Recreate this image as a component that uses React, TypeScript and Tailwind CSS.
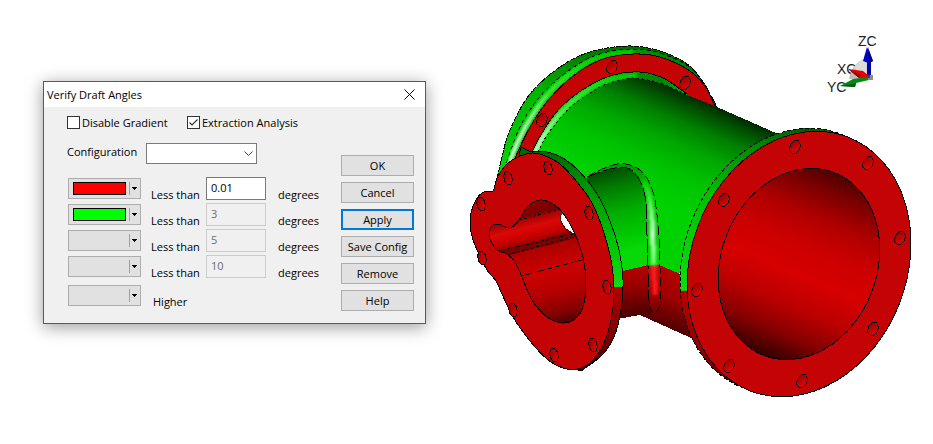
import type { ReactNode } from "react";
import clsx from "clsx";

type Point = [number, number];

interface Range {
  id: string;
  color?: string;
  limit: string;
  disabled: boolean;
}

const ranges: Range[] = [
  { id: "first", color: "bg-[#ff0000]", limit: "0.01", disabled: false },
  { id: "second", color: "bg-[#00ff00]", limit: "3", disabled: true },
  { id: "third", limit: "5", disabled: true },
  { id: "fourth", limit: "10", disabled: true },
];

const actions = ["OK", "Cancel", "Apply", "Save Config", "Remove", "Help"];

// Catmull-Rom curve through the points, written as cubic beziers
function curve(pts: Point[], closed = false) {
  const n = pts.length;
  const at = (i: number) => (closed ? pts[(i + n) % n] : pts[Math.max(0, Math.min(n - 1, i))]);
  let d = `M${pts[0][0]} ${pts[0][1]}`;
  for (let i = 0; i < (closed ? n : n - 1); i++) {
    const [a, b, c, e] = [at(i - 1), at(i), at(i + 1), at(i + 2)];
    d += `C${b[0] + (c[0] - a[0]) / 6} ${b[1] + (c[1] - a[1]) / 6} ${c[0] - (e[0] - b[0]) / 6} ${c[1] - (e[1] - b[1]) / 6} ${c[0]} ${c[1]}`;
  }
  return closed ? d + "Z" : d;
}

// outline of a tilted flange disc, in drawing coordinates so gradients stay upright
function disc(cx: number, cy: number, rx: number, ry: number, tilt: number) {
  const dx = ry * Math.sin((tilt * Math.PI) / 180);
  const dy = ry * Math.cos((tilt * Math.PI) / 180);
  return `M${cx + dx} ${cy - dy}A${rx} ${ry} ${tilt} 0 1 ${cx - dx} ${cy + dy}A${rx} ${ry} ${tilt} 0 1 ${cx + dx} ${cy - dy}Z`;
}

const backOuter: Point[] = [[496, 184], [502, 157], [510, 130], [530, 94], [560, 67], [590, 52], [628, 46], [660, 51], [687, 64], [703, 82], [717, 107]];
const backEdge: Point[] = [[503, 176], [508, 158], [523, 121], [547, 89], [577, 65], [603, 53], [633, 49], [660, 53], [688, 66], [705, 85], [716, 107]];
const ringOuter: Point[] = [[510, 172], [515, 158], [530, 127], [550, 98], [577, 73], [603, 59], [633, 54], [660, 57], [690, 71], [707, 89], [715, 108]];
const ringInner: Point[] = [[526, 170], [533, 150], [547, 125], [563, 105], [587, 87], [613, 75], [640, 72], [663, 78], [687, 94]];
const bodyStart: Point[] = [[530, 176], [540, 148], [553, 127], [573, 105], [600, 87], [617, 81], [633, 78], [660, 83], [687, 95]];
const backShine: Point[] = [[507, 172], [513, 153], [527, 124], [548, 94], [577, 69], [603, 56], [633, 52]];
const ringShine: Point[] = [[528, 171], [537, 148], [551, 125], [569, 105], [594, 86], [616, 78], [637, 75]];

const face: Point[] = [
  [493, 191], [497, 178], [507, 164], [520, 156], [532, 153], [543, 155], [560, 164], [577, 182], [592, 203], [603, 230],
  [611, 260], [614, 290], [611, 320], [603, 345], [590, 363], [577, 369], [563, 368], [547, 359], [530, 341], [513, 317],
  [502, 294], [496, 281], [487, 270], [477, 250], [471, 232], [471, 213], [477, 198], [484, 192],
];
const faceRim: Point[] = [
  [520, 156], [532, 152], [547, 152], [563, 158], [580, 172], [597, 194], [610, 221], [619, 250], [623, 280], [621, 310],
  [614, 337], [603, 354], [588, 366], [577, 369], [560, 340], [540, 250],
];
const opening: Point[] = [
  [519, 220], [527, 207], [540, 200], [553, 204], [563, 213], [575, 234], [583, 257], [586, 283], [583, 307], [575, 319],
  [562, 323], [547, 317], [532, 300], [522, 277], [515, 262], [507, 254], [497, 250], [490, 239], [490, 229], [497, 224],
  [510, 228],
];

const filletOuter: Point[] = [[587, 177], [600, 170], [617, 164], [630, 165], [641, 171], [649, 182], [655, 200], [659, 237], [660, 267], [660, 303], [656, 312]];
const filletInner: Point[] = [[587, 177], [610, 169], [627, 168], [637, 176], [643, 188], [646, 203], [647, 235], [648, 265], [649, 300], [652, 313]];
const filletShine: Point[] = [[644, 180], [649, 195], [652, 220], [653, 245], [654, 266]];
const filletPath = curve(filletOuter) + "L652 313" + curve([...filletInner].reverse()).replace("M", "L") + "Z";

const rightHoles: Point[] = [[795, 147], [868, 163], [900, 238], [873, 329], [802, 381], [729, 366], [697, 290], [724, 200]];
const leftHoles: Point[] = [[508, 178], [548, 168], [589, 213], [481, 204], [482, 258], [607, 287], [513, 310], [554, 355], [593, 345]];
const backHoles: Point[] = [[612, 67], [685, 83], [542, 120]];

function Gradient({ id, from, to, stops }: { id: string; from: Point; to: Point; stops: [number, string][] }) {
  return (
    <linearGradient id={id} gradientUnits="userSpaceOnUse" x1={from[0]} y1={from[1]} x2={to[0]} y2={to[1]}>
      {stops.map(([offset, color], i) => (
        <stop key={i} offset={offset} stopColor={color} />
      ))}
    </linearGradient>
  );
}

function Holes({ at, rx, ry, tilt }: { at: Point[]; rx: number; ry: number; tilt: number }) {
  return (
    <g fill="url(#hole)" stroke="#000">
      {at.map(([x, y]) => (
        <ellipse key={`${x}-${y}`} rx={rx} ry={ry} transform={`translate(${x} ${y}) rotate(${tilt})`} />
      ))}
    </g>
  );
}

function AxisTriad() {
  return (
    <g>
      <g fontFamily='"Liberation Sans", Arial, sans-serif' fontSize="14" fill="#222">
        <text x="858" y="46">ZC</text>
        <text x="837" y="74">XC</text>
        <text x="827" y="92">YC</text>
      </g>
      <path d="M866 58Q852 63 849 79L868 79Z" fill="#bdbdbd" />
      <path d="M866 58Q858 61 854 68L867 77Z" fill="#dcdcdc" />
      <path d="M867 58H871V78H867Z" fill="#0000b0" />
      <path d="M867 47L873 61L868 63L863 61Z" fill="#0000c8" />
      <path d="M868 47L873 61L869 63Z" fill="#000078" />
      <path d="M848 69L863 71L869 76L867 79L859 78Z" fill="#e80000" />
      <path d="M848 69L861 75L859 78Z" fill="#a00000" />
      <path d="M840 86L853 79L868 77L869 80L856 83L855 87Z" fill="#008c10" />
      <path d="M840 86L856 83L855 87Z" fill="#005c08" />
      <path d="M868 75H873V80H868Z" fill="#8c8c8c" />
      <path d="M868 75H870V78H868Z" fill="#444" />
    </g>
  );
}

function Model() {
  return (
    <svg viewBox="426 0 507 444" className="min-w-0 flex-1" role="img" aria-label="Draft analysis of the flanged pipe">
      <defs>
        <Gradient id="body" from={[745, 119]} to={[700, 222]} stops={[[0, "#002800"], [0.1, "#005000"], [0.25, "#008000"], [0.45, "#00a800"], [0.7, "#00c400"], [1, "#00d200"]]} />
        <Gradient id="bodyLow" from={[674, 268]} to={[656, 322]} stops={[[0, "#b80000"], [0.5, "#a00000"], [1, "#540000"]]} />
        <Gradient id="back" from={[500, 180]} to={[640, 46]} stops={[[0, "#00d800"], [0.45, "#00b400"], [0.75, "#008000"], [1, "#006c00"]]} />
        <Gradient id="backFillet" from={[508, 170]} to={[690, 60]} stops={[[0, "#00b800"], [0.45, "#00c400"], [0.7, "#00a800"], [1, "#007800"]]} />
        <Gradient id="ringFillet" from={[530, 165]} to={[685, 90]} stops={[[0, "#10cc10"], [0.5, "#00c000"], [0.75, "#009400"], [0.9, "#008400"], [1, "#00b400"]]} />
        <Gradient id="shine" from={[515, 160]} to={[605, 60]} stops={[[0, "#e0ffe0"], [0.25, "#b0ffb0"], [0.55, "#40f040"], [1, "#00d400"]]} />
        <Gradient id="branch" from={[605, 172]} to={[624, 252]} stops={[[0, "#005000"], [0.2, "#007c00"], [0.5, "#00ac00"], [0.8, "#00c800"], [1, "#08d808"]]} />
        <Gradient id="branchLow" from={[634, 266]} to={[640, 316]} stops={[[0, "#b80000"], [0.4, "#980000"], [1, "#480000"]]} />
        <Gradient id="fillet" from={[650, 164]} to={[654, 314]} stops={[[0, "#009800"], [0.2, "#00c000"], [0.67, "#00d000"], [0.68, "#d00808"], [0.82, "#b80000"], [1, "#6c0000"]]} />
        <Gradient id="filletShine" from={[0, 180]} to={[0, 286]} stops={[[0, "#00d000"], [0.25, "#60f860"], [0.5, "#d0ffd0"], [0.75, "#70ff70"], [1, "#10e010"]]} />
        <Gradient id="leftRim" from={[0, 152]} to={[0, 369]} stops={[[0, "#006800"], [0.12, "#008c00"], [0.4, "#00c000"], [0.62, "#10dc10"], [0.625, "#b40000"], [0.8, "#880000"], [1, "#500000"]]} />
        <Gradient id="rightRim" from={[0, 128]} to={[0, 394]} stops={[[0, "#005c00"], [0.06, "#008800"], [0.25, "#00c000"], [0.61, "#10dc10"], [0.615, "#b40000"], [0.8, "#980000"], [1, "#600000"]]} />
        <Gradient id="bore" from={[838, 172]} to={[759, 357]} stops={[[0, "#480000"], [0.1, "#780000"], [0.25, "#b00000"], [0.4, "#cc0000"], [0.55, "#d60000"], [0.7, "#bc0000"], [0.85, "#840000"], [1, "#280000"]]} />
        <Gradient id="boreLow" from={[550, 245]} to={[568, 323]} stops={[[0, "#ac0000"], [0.3, "#cc0000"], [0.6, "#b40000"], [0.85, "#840000"], [1, "#480000"]]} />
        <Gradient id="boreTop" from={[535, 200]} to={[542, 219]} stops={[[0, "#900000"], [1, "#6c0000"]]} />
        <Gradient id="boreMid" from={[526, 216]} to={[534, 248]} stops={[[0, "#940000"], [0.35, "#dc0808"], [0.65, "#c40000"], [1, "#700000"]]} />
        <linearGradient id="hole" x1="0" y1="0" x2="1" y2="1">
          <stop offset="0" stopColor="#8c0000" />
          <stop offset="1" stopColor="#f00808" />
        </linearGradient>
        <filter id="soft" filterUnits="userSpaceOnUse" x="480" y="30" width="300" height="300">
          <feGaussianBlur stdDeviation="1.4" />
        </filter>
        <clipPath id="openingClip">
          <path d={curve(opening, true)} />
        </clipPath>
        <clipPath id="backClip">
          <path d={curve(backEdge) + "L650 200Z"} />
        </clipPath>
        <clipPath id="ringClip">
          <path d={curve(ringInner) + "L650 200Z"} />
        </clipPath>
        <clipPath id="filletClip">
          <path d={filletPath} />
        </clipPath>
      </defs>

      <g shapeRendering="crispEdges" fill="none">
        {/* back flange */}
        <path d={curve(backOuter) + "L650 200Z"} fill="url(#back)" />
        <path d={curve(backOuter)} stroke="#000" strokeDasharray="5 1" />
        <path d={curve(backEdge) + "L650 200Z"} fill="url(#backFillet)" />
        <g clipPath="url(#backClip)">
          <path d={curve(backShine)} stroke="url(#shine)" strokeWidth="4" filter="url(#soft)" />
        </g>
        <path d={curve(backEdge)} stroke="#000" strokeDasharray="4 3" />
        <path d={curve(ringOuter) + "L650 200Z"} fill="#c40404" />
        <path d={curve(ringOuter)} stroke="#000" />
        <path d={curve(ringInner) + "L650 200Z"} fill="url(#ringFillet)" />
        <g clipPath="url(#ringClip)">
          <path d={curve(ringShine)} stroke="url(#shine)" strokeWidth="5" filter="url(#soft)" />
        </g>
        <path d={curve(ringInner)} stroke="#000" />
        <Holes at={backHoles} rx={5} ry={7} tilt={21} />

        {/* main pipe */}
        <path d={curve(bodyStart) + "L717 107L778 134L760 300L678 273L659 265L648 265L560 280Z"} fill="url(#body)" />
        <path d={curve(bodyStart)} stroke="#000" strokeDasharray="2 3" />
        <path d="M648 265L659 265L678 273L700 283L700 342L640 315Z" fill="url(#bodyLow)" />

        {/* branch */}
        <path d={curve(filletInner) + "L640 315L616 316L580 240Z"} fill="url(#branch)" />
        <path d="M600 278L623 271L648 265L649 300L652 314L640 315L600 322Z" fill="url(#branchLow)" />
        <path d={filletPath} fill="url(#fillet)" />
        <g clipPath="url(#filletClip)">
          <path d={curve(filletShine)} stroke="url(#filletShine)" strokeWidth="5" filter="url(#soft)" />
          <path d="M654 266L655 295" stroke="#ff2020" strokeWidth="4" filter="url(#soft)" />
        </g>
        <path d={curve(filletOuter)} stroke="#000" strokeDasharray="9 4" />
        <path d={curve(filletInner)} stroke="#000" strokeDasharray="14 3" />

        {/* right flange */}
        <path d={disc(792, 261, 108, 136, 21)} fill="url(#rightRim)" />
        <path d={disc(792, 261, 108, 136, 21)} stroke="#000" strokeDasharray="4 2" />
        <path d={disc(799, 264, 108, 136, 21)} fill="#c40404" stroke="#000" />
        <path d={disc(799, 264, 78, 98, 21)} fill="url(#bore)" stroke="#000" />
        <Holes at={rightHoles} rx={5} ry={7} tilt={21} />

        {/* left flange */}
        <path d={curve(faceRim, true)} fill="url(#leftRim)" stroke="#000" />
        <path d={curve(face, true)} fill="#c40404" stroke="#000" />
        <g clipPath="url(#openingClip)">
          <path d="M485 195H590V325H485Z" fill="url(#boreLow)" />
          <path d="M485 195H590V206L510 228Z" fill="url(#boreTop)" />
          <path d="M480 233L519 219L562 208L580 234L500 256L485 255Z" fill="url(#boreMid)" />
          <path d="M498 251L580 229L584 236L506 256Z" fill="#7c0000" />
          <path d="M560 216L567 210L584 236L572 233L563 226Z" fill="#fff" />
          <path d="M560 215Q560 229 577 235" stroke="#600000" />
          <path d="M519 220L562 209M497 251L574 234M507 255L577 236" stroke="#000" strokeDasharray="3 2" />
          <path d="M521 276L586 259" stroke="#000" strokeDasharray="12 2" />
        </g>
        <path d={curve(opening, true)} stroke="#000" />
        <Holes at={leftHoles} rx={4} ry={7} tilt={-12} />
      </g>
      <AxisTriad />
    </svg>
  );
}

function ColorPicker({ color, label }: { color?: string; label: string }) {
  return (
    <button
      type="button"
      aria-label={label}
      aria-haspopup="listbox"
      className="flex h-[21px] w-[73px] items-center border border-[#adadad] bg-[#e1e1e1] pl-1"
    >
      <span className={clsx("h-[13px] w-[53px]", color && "border border-black", color)} />
      <span className="ml-[3px] flex h-[13px] items-center border-l border-[#a0a0a0] pl-[2px]">
        <svg width="5" height="3" shapeRendering="crispEdges" aria-hidden="true">
          <path d="M0 0H5V1H4V2H3V3H2V2H1V1H0Z" />
        </svg>
      </span>
    </button>
  );
}

function Check({ label, defaultChecked = false }: { label: string; defaultChecked?: boolean }) {
  return (
    <label className="flex items-center gap-[2px] leading-[15px] whitespace-nowrap">
      <span className="grid">
        <input
          type="checkbox"
          defaultChecked={defaultChecked}
          className="peer col-start-1 row-start-1 size-[13px] appearance-none border border-[#333] bg-white"
        />
        <svg
          viewBox="0 0 13 13"
          className="pointer-events-none invisible col-start-1 row-start-1 size-[13px] fill-none stroke-[#333] peer-checked:visible"
          aria-hidden="true"
        >
          <path d="M2.5 6.5L5 9L10.5 3.5" strokeWidth="1.2" />
        </svg>
      </span>
      {label}
    </label>
  );
}

function RangeRow({ range }: { range: Range }) {
  return (
    <div className="flex h-[23px] items-center leading-[11px]">
      <ColorPicker color={range.color} label={`${range.id} range color`} />
      <label htmlFor={range.id} className="ml-[10px] w-[55px] self-end whitespace-nowrap">
        Less than
      </label>
      <input
        id={range.id}
        defaultValue={range.limit}
        disabled={range.disabled}
        className="h-[23px] w-[60px] border border-[#7a7a7a] bg-white pb-[2px] pl-1 disabled:border-[#ccc] disabled:bg-[#f0f0f0] disabled:text-[#6d6d6d]"
      />
      <span className="ml-3 self-end">degrees</span>
    </div>
  );
}

function Dialog({ title, children }: { title: string; children: ReactNode }) {
  return (
    <section
      role="dialog"
      aria-label={title}
      className="mt-[81px] ml-[43px] w-[383px] shrink-0 border border-[#1a6aa8] bg-[#f0f0f0] shadow-[0_3px_16px_rgba(0,0,0,0.4)]"
    >
      <header className="flex h-[25px] items-center justify-between bg-white pr-[10px] pl-[3px]">
        <h1 className='font-["Open_Sans",sans-serif] text-[11px]'>{title}</h1>
        <button type="button" aria-label="Close">
          <svg width="11" height="11" className="fill-none stroke-black" aria-hidden="true">
            <path d="M0.5 0.5L10.5 10.5M10.5 0.5L0.5 10.5" />
          </svg>
        </button>
      </header>
      {children}
    </section>
  );
}

export default function App() {
  return (
    <main className='flex min-h-screen items-start bg-white font-["Open_Sans","Noto_Sans",sans-serif] text-[11px] leading-[14px] text-black'>
      <Dialog title="Verify Draft Angles">
        <form className="flex justify-between pr-[11px] pl-[23px]" onSubmit={(e) => e.preventDefault()}>
          <div className="pt-2 pb-4">
            <div className="grid grid-cols-[120px_auto]">
              <Check label="Disable Gradient" />
              <Check label="Extraction Analysis" defaultChecked />
            </div>
            <div className="mt-[13px] flex">
              <label htmlFor="configuration" className="w-[79px] leading-[17px]">
                Configuration
              </label>
              <div className="grid items-center">
                <select
                  id="configuration"
                  className="col-start-1 row-start-1 h-[21px] w-[111px] appearance-none border border-[#7a7a7a] bg-white pl-1"
                >
                  <option value=""></option>
                </select>
                <svg
                  viewBox="0 0 9 5"
                  className="pointer-events-none col-start-1 row-start-1 mr-1 h-[5px] w-[9px] justify-self-end fill-none stroke-[#444]"
                  aria-hidden="true"
                >
                  <path d="M0.5 0.5L4.5 4.5L8.5 0.5" />
                </svg>
              </div>
            </div>
            <div className="mt-[13px] flex flex-col gap-[3px] pl-px">
              {ranges.map((range) => (
                <RangeRow key={range.id} range={range} />
              ))}
            </div>
            <div className="mt-[6px] flex h-[23px] items-center pl-px leading-[11px]">
              <ColorPicker label="Higher range color" />
              <span className="ml-3 self-end">Higher</span>
            </div>
          </div>
          <div className="flex w-[73px] flex-col gap-[6px] pt-12">
            {actions.map((action) => (
              <button
                key={action}
                type="button"
                className={clsx(
                  "h-[21px] bg-[#e1e1e1] whitespace-nowrap",
                  action === "Apply" ? "border-2 border-[#0078d7]" : "border border-[#adadad]"
                )}
              >
                {action}
              </button>
            ))}
          </div>
        </form>
      </Dialog>
      <Model />
    </main>
  );
}
